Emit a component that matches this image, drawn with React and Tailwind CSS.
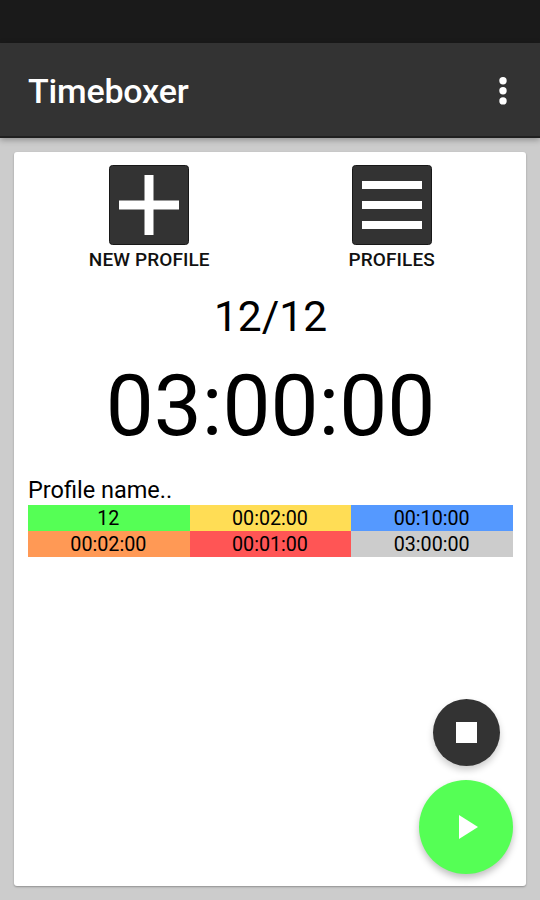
import React from "react";

const cells = [
  { text: "12", color: "bg-[#55ff55]" },
  { text: "00:02:00", color: "bg-[#ffdd55]" },
  { text: "00:10:00", color: "bg-[#5599ff]" },
  { text: "00:02:00", color: "bg-[#ff9955]" },
  { text: "00:01:00", color: "bg-[#ff5555]" },
  { text: "03:00:00", color: "bg-[#cccccc]" },
];

function Topbar() {
  return (
    <header className="relative z-10 flex h-[95px] items-center justify-between border-b-2 border-[#202020] bg-[#333333] pl-7 pr-[32px] shadow-[0_2px_6px_rgba(0,0,0,0.3)]">
      <h1 className="pt-[3px] text-[34px] leading-10 font-medium tracking-[-0.2px] text-white">
        Timeboxer
      </h1>
      <button aria-label="More options" className="pt-[2px]">
        <svg width="10" height="30" viewBox="0 0 10 30" fill="#fff">
          <circle cx="5" cy="4.7" r="3.7" />
          <circle cx="5" cy="14.8" r="3.7" />
          <circle cx="5" cy="24.9" r="3.7" />
        </svg>
      </button>
    </header>
  );
}

function ProfileButton({ label, children }) {
  return (
    <button className="flex flex-1 flex-col items-center">
      <svg width="80" height="80" viewBox="0 0 80 80">
        <rect x="0.5" y="0.5" width="79" height="79" rx="3" fill="#333" stroke="#181818" />
        {children}
      </svg>
      <span className="mt-[3px] text-[19px] leading-6 font-medium tracking-[0.1px] text-[#111111]">
        {label}
      </span>
    </button>
  );
}

export default function App() {
  return (
    <div className="flex h-[900px] w-[540px] flex-col bg-[#cccccc] font-['Roboto',sans-serif] text-black">
      <div className="h-[43px] bg-[#1a1a1a]" />
      <Topbar />

      <main className="mx-[14px] mt-[14px] mb-[14px] flex flex-1 flex-col rounded-[3px] bg-white pl-[14px] pr-[13px] pt-[13px] pb-[12.5px] shadow-[0_1px_2px_rgba(0,0,0,0.3)]">
        <div className="flex">
          <ProfileButton label="NEW PROFILE">
            <path d="M35.5 10h9v25.5H70v9H44.5V70h-9V44.5H10v-9h25.5z" fill="#fff" />
          </ProfileButton>
          <ProfileButton label="PROFILES">
            <path d="M10 16h60v8H10zM10 36h60v8H10zM10 56h60v8H10z" fill="#fff" />
          </ProfileButton>
        </div>

        <div className="mt-[20px] text-center text-[42.5px] leading-[50px]">12/12</div>
        <div className="mt-[12px] text-center text-[85.5px] leading-[104px]">03:00:00</div>

        <div className="mt-[18px] text-[23.5px] leading-7">Profile name..</div>
        <div className="mt-[0.5px] grid grid-cols-3">
          {cells.map((cell, i) => (
            <div key={i} className={`h-[26px] pr-px text-center text-[19.7px] leading-[27px] ${cell.color}`}>
              {cell.text}
            </div>
          ))}
        </div>

        {/* timer controls */}
        <div className="mt-auto flex w-[94px] flex-col items-center gap-[14px] self-end">
          <button
            aria-label="Stop"
            className="flex size-[67px] items-center justify-center rounded-full bg-[#333333] shadow-[0_4px_7px_rgba(0,0,0,0.2)]"
          >
            <span className="size-[21px] bg-white" />
          </button>
          <button
            aria-label="Start"
            className="flex size-[94px] items-center justify-center rounded-full bg-[#55ff55] shadow-[0_4px_7px_rgba(0,0,0,0.25)]"
          >
            <svg className="ml-[5px]" width="19" height="24" viewBox="0 0 19 24" fill="#fff">
              <path d="M0 0v24l19-12z" />
            </svg>
          </button>
        </div>
      </main>
    </div>
  );
}
